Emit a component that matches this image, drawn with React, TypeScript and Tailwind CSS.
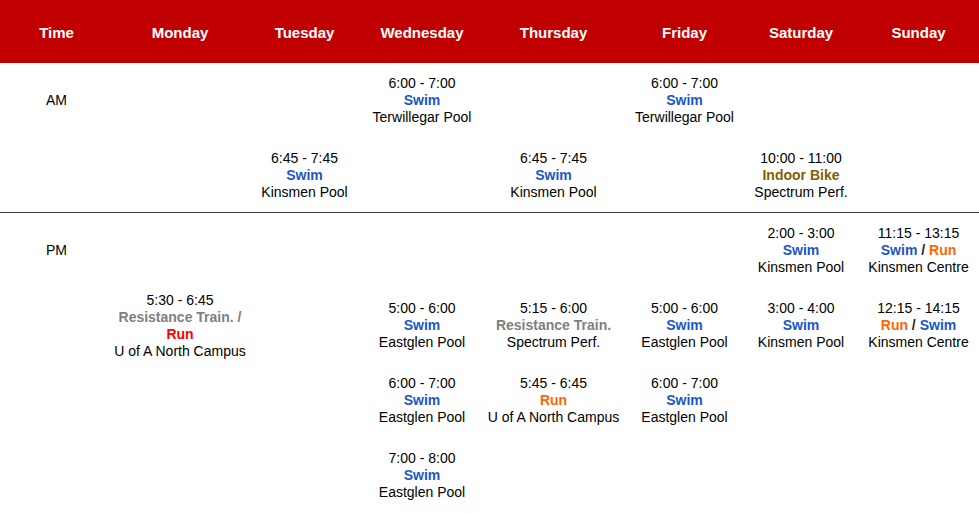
// Weekly training schedule · AM / PM slots per day
import React from "react";

type Act = { label: string; tone: "swim" | "run" | "runRed" | "gym" | "bike" };

type Entry = {
  col: number;
  row: number;
  time: string;
  acts: Act[];
  place: string;
};

const days = ["Time", "Monday", "Tuesday", "Wednesday", "Thursday", "Friday", "Saturday", "Sunday"];

const tone: Record<Act["tone"], string> = {
  swim: "text-[#1a56c8]",
  run: "text-[#ff6600]",
  runRed: "text-[#ff0000]",
  gym: "text-[#7f7f7f]",
  bike: "text-[#7f6000]",
};

const colStart: Record<number, string> = {
  1: "col-start-1",
  2: "col-start-2",
  3: "col-start-3",
  4: "col-start-4",
  5: "col-start-5",
  6: "col-start-6",
  7: "col-start-7",
  8: "col-start-8",
};

const rowStart: Record<number, string> = {
  1: "row-start-1",
  2: "row-start-2",
  3: "row-start-3",
  4: "row-start-4",
};

const swim: Act = { label: "Swim", tone: "swim" };

const am: Entry[] = [
  { col: 4, row: 1, time: "6:00 - 7:00", acts: [swim], place: "Terwillegar Pool" },
  { col: 6, row: 1, time: "6:00 - 7:00", acts: [swim], place: "Terwillegar Pool" },
  { col: 3, row: 2, time: "6:45 - 7:45", acts: [swim], place: "Kinsmen Pool" },
  { col: 5, row: 2, time: "6:45 - 7:45", acts: [swim], place: "Kinsmen Pool" },
  {
    col: 7,
    row: 2,
    time: "10:00 - 11:00",
    acts: [{ label: "Indoor Bike", tone: "bike" }],
    place: "Spectrum Perf.",
  },
];

const pm: Entry[] = [
  { col: 7, row: 1, time: "2:00 - 3:00", acts: [swim], place: "Kinsmen Pool" },
  {
    col: 8,
    row: 1,
    time: "11:15 - 13:15",
    acts: [swim, { label: "Run", tone: "run" }],
    place: "Kinsmen Centre",
  },
  { col: 4, row: 2, time: "5:00 - 6:00", acts: [swim], place: "Eastglen Pool" },
  {
    col: 5,
    row: 2,
    time: "5:15 - 6:00",
    acts: [{ label: "Resistance Train.", tone: "gym" }],
    place: "Spectrum Perf.",
  },
  { col: 6, row: 2, time: "5:00 - 6:00", acts: [swim], place: "Eastglen Pool" },
  { col: 7, row: 2, time: "3:00 - 4:00", acts: [swim], place: "Kinsmen Pool" },
  {
    col: 8,
    row: 2,
    time: "12:15 - 14:15",
    acts: [{ label: "Run", tone: "run" }, swim],
    place: "Kinsmen Centre",
  },
  { col: 4, row: 3, time: "6:00 - 7:00", acts: [swim], place: "Eastglen Pool" },
  {
    col: 5,
    row: 3,
    time: "5:45 - 6:45",
    acts: [{ label: "Run", tone: "run" }],
    place: "U of A North Campus",
  },
  { col: 6, row: 3, time: "6:00 - 7:00", acts: [swim], place: "Eastglen Pool" },
  { col: 4, row: 4, time: "7:00 - 8:00", acts: [swim], place: "Eastglen Pool" },
];

const gridCols =
  "grid grid-cols-[113px_134px_115px_120px_143px_119px_114px_1fr]";

function Slot({ e }: { e: Entry }) {
  return (
    <div
      className={`${colStart[e.col]} ${rowStart[e.row]} flex flex-col items-center justify-center text-center`}
    >
      <div>{e.time}</div>
      <div className="font-bold">
        {e.acts.map((a, i) => (
          <React.Fragment key={i}>
            {i > 0 && <span className="text-[#1f1f1f]"> / </span>}
            <span className={tone[a.tone]}>{a.label}</span>
          </React.Fragment>
        ))}
      </div>
      <div>{e.place}</div>
    </div>
  );
}

export default function App() {
  return (
    <div className="h-[513px] w-[979px] overflow-hidden bg-white font-['Liberation_Sans',Arial,sans-serif] text-[14px] leading-[17px] text-black">
      <div className={`${gridCols} h-[63px] items-center bg-[#c00000] pt-[2px] text-[15px] font-bold text-white`}>
        {days.map((d) => (
          <div key={d} className="text-center">
            {d}
          </div>
        ))}
      </div>

      <div className={`${gridCols} grid-rows-[75px_74px] border-b border-[#404040]`}>
        <div className="col-start-1 row-start-1 flex items-center justify-center">AM</div>
        {am.map((e, i) => (
          <Slot key={i} e={e} />
        ))}
      </div>

      <div className={`${gridCols} grid-rows-[75px_75px_75px_75px]`}>
        <div className="col-start-1 row-start-1 flex items-center justify-center">PM</div>
        <div className="col-start-2 row-start-2 flex flex-col items-center justify-center text-center">
          <div>5:30 - 6:45</div>
          <div className="font-bold text-[#7f7f7f]">Resistance Train. /</div>
          <div className="font-bold text-[#ff0000]">Run</div>
          <div>U of A North Campus</div>
        </div>
        {pm.map((e, i) => (
          <Slot key={i} e={e} />
        ))}
      </div>
    </div>
  );
}
